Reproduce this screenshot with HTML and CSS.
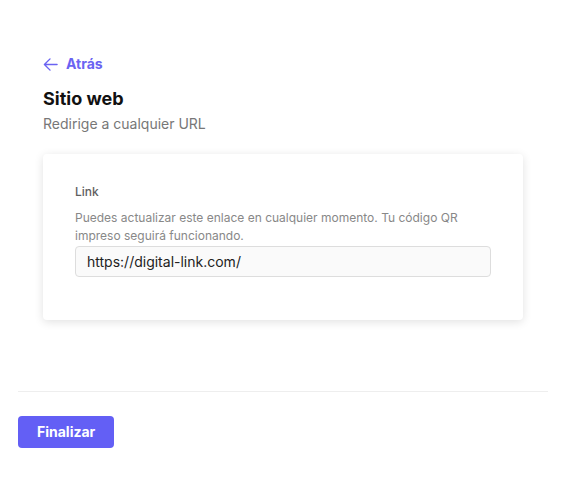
FILE: index.html
```html
<!DOCTYPE html>
<html lang="es">
<head>
    <meta charset="UTF-8">
    <meta name="viewport" content="width=device-width, initial-scale=1.0">
    <title>Sitio web</title>
    <link rel="stylesheet" href="styles.css">
</head>
<body>
    <div class="page">
        <div class="content">
            <a class="back" href="#">
                <svg width="15" height="15" viewBox="0 0 16 16" fill="none" stroke="currentColor" stroke-width="1.5" stroke-linecap="round" stroke-linejoin="round">
                    <path d="M15 8H1.5M7.5 2L1.5 8l6 6"/>
                </svg>
                Atrás
            </a>
            <h1>Sitio web</h1>
            <p class="subtitle">Redirige a cualquier URL</p>

            <div class="card">
                <div class="form-group">
                    <label for="link">Link</label>
                    <p class="hint">Puedes actualizar este enlace en cualquier momento. Tu código QR impreso seguirá funcionando.</p>
                    <input type="text" id="link" value="https://digital-link.com/">
                </div>
            </div>
        </div>

        <div class="footer">
            <button class="btn primary">Finalizar</button>
        </div>
    </div>
</body>
</html>
```

FILE: styles.css
```css
body {
    font-family: Inter, 'Noto Sans', sans-serif;
    margin: 0;
    background: #fff;
    color: #111;
}
.page {
    padding: 0 18px;
}
.content {
    padding: 55px 25px 71px;
}
.back {
    display: inline-flex;
    align-items: center;
    gap: 8px;
    color: #6a63f2;
    font-size: 14px;
    font-weight: 700;
    text-decoration: none;
    line-height: 18px;
}
h1 {
    font-size: 18px;
    font-weight: 700;
    margin: 11px 0 0;
    line-height: 24px;
    color: #111;
}
.subtitle {
    font-size: 14px;
    color: #777;
    margin: 3px 0 0;
    line-height: 20px;
}
.card {
    margin-top: 20px;
    padding: 30px 32px 43px;
    background: #fff;
    border-radius: 4px;
    box-shadow: 0 2px 10px rgba(0,0,0,0.12);
}
.form-group label {
    display: block;
    font-size: 12px;
    font-weight: 500;
    color: #5f5f5f;
    line-height: 16px;
}
.hint {
    font-size: 12px;
    color: #888;
    line-height: 18px;
    margin: 9px 0 0;
}
.form-group input {
    box-sizing: border-box;
    display: block;
    width: 100%;
    height: 31px;
    margin-top: 1px;
    padding: 0 11px;
    border: 1px solid #ddd;
    border-radius: 4px;
    background: #fafafa;
    color: #222;
    font-family: inherit;
    font-size: 14px;
}
.footer {
    border-top: 1px solid #eee;
    padding-top: 24px;
}
.btn {
    border: none;
    border-radius: 4px;
    font-family: inherit;
    font-size: 14px;
    font-weight: 700;
    cursor: pointer;
}
.btn.primary {
    background: #635ff5;
    color: #fff;
    padding: 0 19px;
    height: 32px;
}
```
